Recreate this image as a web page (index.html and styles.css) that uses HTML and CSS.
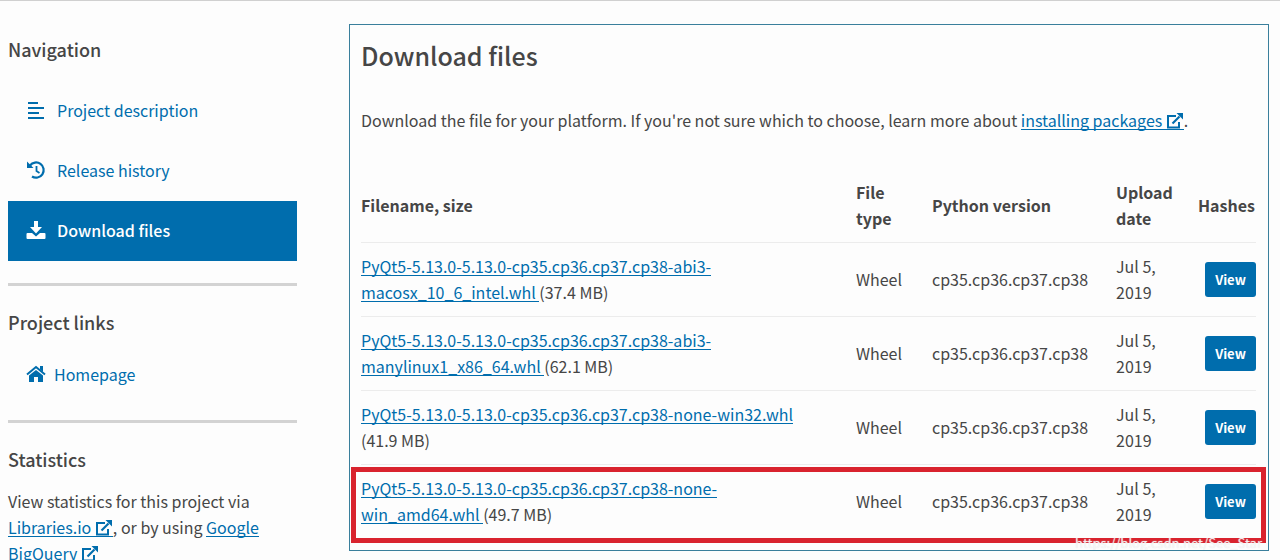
FILE: index.html
```html
<!DOCTYPE html>
<html lang="en">
  <head>
    <meta charset="UTF-8" />
    <meta name="viewport" content="width=device-width, initial-scale=1.0" />
    <title>PyQt5 - Download files</title>
    <link rel="stylesheet" href="styles.css">
  </head>
  <body>
    <!-- shared icon shapes -->
    <svg class="sprite" aria-hidden="true">
      <symbol id="external" viewBox="0 0 18 16">
        <path d="M10 3H2v11.5h11V9" fill="none" stroke="currentColor" stroke-width="2" />
        <path d="M6.5 10.5l7-7" fill="none" stroke="currentColor" stroke-width="2.2" />
        <path d="M10.5 0H17v6.5z" fill="currentColor" />
      </symbol>
    </svg>

    <div class="page">
      <aside class="sidebar">
        <section class="sidebar-section">
          <h3>Navigation</h3>
          <nav class="tabs">
            <a class="tab" href="#description">
              <svg class="icon" viewBox="0 0 20 20">
                <path d="M2 2h10v2H2zM2 7h16v2H2zM2 12h11v2H2zM2 17h16v2H2z" fill="currentColor" />
              </svg>
              Project description
            </a>
            <a class="tab" href="#history">
              <svg class="icon" viewBox="0 0 20 20">
                <path d="M4 5.5A7.6 7.6 0 1 1 6 16.5" fill="none" stroke="currentColor" stroke-width="2.2" />
                <path d="M1 1.5v6.5h6.5z" fill="currentColor" />
                <path d="M10.5 6v5l3 2" fill="none" stroke="currentColor" stroke-width="1.8" />
              </svg>
              Release history
            </a>
            <a class="tab tab-active" href="#files">
              <svg class="icon" viewBox="0 0 20 20">
                <path d="M8 1h4v6h4l-6 6.5L4 7h4z" fill="currentColor" />
                <path d="M1.5 13H6l4 3.5 4-3.5h4.500q1 0 1 1v4q0 1-1 1h-17q-1 0-1-1v-4q0-1 1-1z" fill="currentColor" />
              </svg>
              Download files
            </a>
          </nav>
        </section>

        <section class="sidebar-section">
          <h3>Project links</h3>
          <a class="project-link" href="#home">
            <svg class="icon" viewBox="0 0 20 18">
              <path d="M1 9.5L10 2l9 7.5" fill="none" stroke="currentColor" stroke-width="2" />
              <path d="M14 1h3v6l-3-2.5z" fill="currentColor" />
              <path d="M3 10.5l7-5.5 7 5.500V17h-5v-5H8v5H3z" fill="currentColor" />
            </svg>
            Homepage
          </a>
        </section>

        <section class="sidebar-section">
          <h3>Statistics</h3>
          <p>
            View statistics for this project via
            <a class="link" href="#libraries">Libraries.io <svg class="external"><use href="#external" /></svg></a>, or by using
            <a class="link" href="#bigquery">Google BigQuery <svg class="external"><use href="#external" /></svg></a>
          </p>
        </section>
      </aside>

      <main class="content" id="files">
        <h2>Download files</h2>
        <p>
          Download the file for your platform. If you're not sure which to choose, learn more about
          <a class="link" href="#installing">installing packages <svg class="external"><use href="#external" /></svg></a>.
        </p>

        <table class="files">
          <thead>
            <tr>
              <th class="col-name">Filename, size</th>
              <th class="col-type">File type</th>
              <th class="col-python">Python version</th>
              <th class="col-date">Upload date</th>
              <th class="col-hashes">Hashes</th>
            </tr>
          </thead>
          <tbody>
            <tr>
              <td><a class="link" href="#mac">PyQt5-5.13.0-5.13.0-cp35.cp36.cp37.cp38-abi3-macosx_10_6_intel.whl </a>(37.4 MB)</td>
              <td>Wheel</td>
              <td>cp35.cp36.cp37.cp38</td>
              <td>Jul 5, 2019</td>
              <td><button class="view" type="button">View</button></td>
            </tr>
            <tr>
              <td><a class="link" href="#linux">PyQt5-5.13.0-5.13.0-cp35.cp36.cp37.cp38-abi3-manylinux1_x86_64.whl </a>(62.1 MB)</td>
              <td>Wheel</td>
              <td>cp35.cp36.cp37.cp38</td>
              <td>Jul 5, 2019</td>
              <td><button class="view" type="button">View</button></td>
            </tr>
            <tr>
              <td><a class="link" href="#win32">PyQt5-5.13.0-5.13.0-cp35.cp36.cp37.cp38-none-win32.whl </a>(41.9&nbsp;MB)</td>
              <td>Wheel</td>
              <td>cp35.cp36.cp37.cp38</td>
              <td>Jul 5, 2019</td>
              <td><button class="view" type="button">View</button></td>
            </tr>
            <tr>
              <td><a class="link" href="#win64">PyQt5-5.13.0-5.13.0-cp35.cp36.cp37.cp38-none-win_amd64.whl </a>(49.7 MB)</td>
              <td>Wheel</td>
              <td>cp35.cp36.cp37.cp38</td>
              <td>Jul 5, 2019</td>
              <td><button class="view" type="button">View</button></td>
            </tr>
          </tbody>
        </table>

        <div class="highlight"></div>
        <span class="watermark">https://blog.csdn.net/See_Star</span>
      </main>
    </div>
  </body>
</html>
```

FILE: styles.css
```css
* {
  box-sizing: border-box;
}

body {
  margin: 0;
  background-color: #fdfdfd;
  border-top: 1px solid #d0d0d0;
  color: #464646;
  font-family: "Noto Sans CJK SC", "Open Sans", sans-serif;
  font-size: 16px;
  line-height: 26px;
}

h2,
h3,
p {
  margin: 0;
}

h2,
h3 {
  font-weight: 500;
}

.sprite {
  display: none;
}

.page {
  display: flex;
  align-items: flex-start;
  gap: 52px;
  padding: 23px 11px 0 8px;
}

/* sidebar */
.sidebar {
  flex: 0 0 289px;
  padding-top: 12px;
}

.sidebar-section + .sidebar-section {
  margin-top: 22px;
  padding-top: 23px;
  border-top: 3px solid #d3d3d3;
}

.sidebar h3 {
  font-size: 18px;
}

.tabs {
  margin-top: 19px;
}

.tab {
  display: flex;
  align-items: center;
  gap: 11px;
  height: 60px;
  padding: 0 18px 2px;
  color: #006dad;
  text-decoration: none;
}

.tab-active {
  background-color: #006dad;
  color: #ffffff;
  font-weight: 500;
}

.project-link {
  display: flex;
  align-items: center;
  gap: 8px;
  margin: 26px 0 33px 18px;
  color: #006dad;
  text-decoration: none;
}

.icon {
  width: 20px;
  height: 20px;
}

.sidebar p {
  margin-top: 16px;
}

.link {
  background: linear-gradient(#006dad, #006dad) left bottom 2px / 100% 1px no-repeat;
  color: #006dad;
  text-decoration: none;
}

.external {
  width: 18px;
  height: 16px;
  vertical-align: -2px;
}

/* downloads */
.content {
  position: relative;
  flex: 1;
  min-width: 0;
  padding: 14px 12px 12px 11px;
  border: 1px solid #3a7f9c;
}

.content h2 {
  font-size: 25px;
  line-height: 32px;
}

.content p {
  margin: 36px 0 35px;
}

.files {
  width: 100%;
  table-layout: fixed;
  border-collapse: collapse;
}

.files th,
.files td {
  height: 74px;
  padding: 0;
  text-align: left;
  vertical-align: middle;
}

.files th {
  font-weight: 700;
}

.files td {
  border-top: 1px solid #ececec;
}

.files td:first-child {
  padding-right: 32px;
}

.files .col-type {
  width: 76px;
  padding-right: 20px;
}

.files .col-python {
  width: 184px;
}

.files .col-date {
  width: 82px;
}

.files .col-hashes {
  width: 58px;
}

.files td:nth-child(4) {
  padding-right: 24px;
}

.files td:last-child {
  text-align: right;
}

.view {
  width: 51px;
  height: 35px;
  padding: 0;
  border: 0;
  border-radius: 3px;
  background-color: #006dad;
  color: #ffffff;
  font-family: inherit;
  font-size: 13px;
  font-weight: 700;
}

.highlight {
  position: absolute;
  right: 2px;
  bottom: 7px;
  left: 1px;
  height: 76px;
  border: 5px solid #d9232e;
}

.watermark {
  position: absolute;
  right: 0;
  bottom: 0;
  width: 193px;
  height: 14px;
  overflow: hidden;
  color: rgba(255, 255, 255, 0.7);
  font-size: 13px;
  line-height: 14px;
  text-shadow: 0 0 1px #e0e0e0;
  white-space: nowrap;
}
```
